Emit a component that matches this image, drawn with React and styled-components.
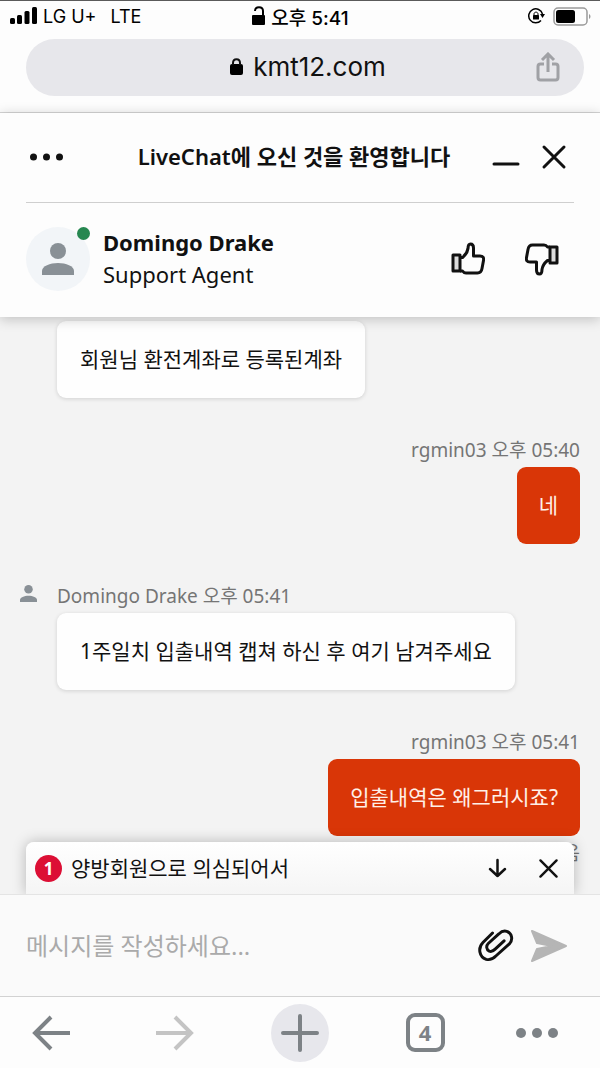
import React from "react";
import styled, { createGlobalStyle, css } from "styled-components";

const GlobalStyle = createGlobalStyle`
  *, *::before, *::after { box-sizing: border-box; }
  body {
    margin: 0;
    background: #fdfdfd;
    color: #111;
    font-family: "Noto Sans", "Noto Sans CJK KR", sans-serif;
  }
  p, h1, h2 { margin: 0; }
`;

const Screen = styled.div`
  display: flex;
  flex-direction: column;
  min-height: 100vh;
  border-top: 1px solid #5a5a5a;
`;

const StatusBar = styled.div`
  display: grid;
  grid-template-columns: 1fr auto 1fr;
  align-items: center;
  height: 30px;
  padding: 0 9px 0 10px;
  font-family: Inter, "Noto Sans CJK KR", sans-serif;
  color: #000;
`;

const StatusGroup = styled.div`
  display: flex;
  align-items: center;
  gap: ${(p) => p.$gap}px;
  justify-content: ${(p) => p.$align || "flex-start"};
  font-weight: ${(p) => (p.$strong ? 500 : 400)};
  font-size: ${(p) => (p.$strong ? 19 : 18)}px;
`;

const Network = styled.span`
  margin-left: 8px;
`;

const AddressArea = styled.div`
  padding: 8px 16px 16px 26px;
  border-bottom: 1px solid #d6d6d6;
`;

const AddressBar = styled.div`
  display: grid;
  grid-template-columns: 62px 1fr 56px;
  align-items: center;
  height: 57px;
  padding-bottom: 2px;
  border-radius: 29px;
  background: #e7e7eb;
`;

const Address = styled.a`
  grid-column: 2;
  display: flex;
  align-items: center;
  justify-content: center;
  gap: 10px;
  color: #111;
  text-decoration: none;
  font: 400 26px/32px Inter, sans-serif;
`;

const IconButton = styled.button`
  display: flex;
  align-items: center;
  justify-content: center;
  flex: none;
  width: ${(p) => p.$w || 40}px;
  height: ${(p) => p.$h || 40}px;
  padding: 0;
  border: 0;
  background: none;
  color: ${(p) => p.$color || "#111"};
  cursor: pointer;
`;

const ChatHeader = styled.header`
  position: relative;
  z-index: 2;
  padding: 0 26px;
  background: #fdfdfd;
  box-shadow: 0 2px 12px rgba(0, 0, 0, 0.22);
`;

const TitleRow = styled.div`
  display: grid;
  grid-template-columns: 74px 1fr 86px;
  align-items: center;
  height: 90px;
  padding-bottom: 2px;
  border-bottom: 1px solid #cfcfcf;
`;

const Title = styled.h1`
  padding-bottom: 2px;
  text-align: center;
  white-space: nowrap;
  font-size: 22px;
  font-weight: 600;
  line-height: 32px;
`;

const WindowControls = styled.div`
  display: flex;
  justify-content: space-between;
`;

const AgentRow = styled.div`
  display: flex;
  align-items: center;
  height: 114px;
  padding: 0 12px 2px 0;
`;

const Avatar = styled.div`
  position: relative;
  display: flex;
  align-items: center;
  justify-content: center;
  width: 64px;
  height: 64px;
  margin-right: 13px;
  border-radius: 50%;
  background: #f2f5f8;
`;

const Online = styled.span`
  position: absolute;
  top: 0;
  right: 0;
  width: 13px;
  height: 13px;
  border-radius: 50%;
  background: #268750;
`;

const AgentText = styled.div`
  flex: 1;
  padding-bottom: 2px;
  line-height: 32px;
  font-size: 22px;
`;

const AgentName = styled.h2`
  font-size: 22px;
  font-weight: 700;
  line-height: 32px;
`;

const RatingButtons = styled.div`
  display: flex;
  gap: 34px;
`;

const Chat = styled.main`
  position: relative;
  display: flex;
  flex-direction: column;
  gap: 35px;
  flex: 1;
  padding: 4px 20px 24px;
  background: #f3f3f3;
`;

const Message = styled.article`
  display: flex;
  flex-direction: column;
  align-items: ${(p) => (p.$own ? "flex-end" : "flex-start")};
  padding-left: ${(p) => (p.$own ? 0 : 37)}px;
`;

const Meta = styled.p`
  display: flex;
  align-items: center;
  height: 34px;
  padding-bottom: 2px;
  color: #757575;
  font-size: 19px;
`;

const MiniAvatar = styled.span`
  display: flex;
  width: 37px;
  margin-left: -37px;
  padding-bottom: 3px;
`;

const Bubble = styled.p`
  padding: 22px;
  border-radius: 9px;
  background: #fefefe;
  box-shadow: 0 1px 4px rgba(0, 0, 0, 0.14);
  font-size: 21px;
  line-height: 33px;
  ${(p) =>
    p.$own &&
    css`
      background: #d93607;
      color: #fff0e8;
      box-shadow: none;
    `}
  ${(p) =>
    !p.$own &&
    css`
      padding: 22px 23px;
    `}
`;

const NewMessage = styled.aside`
  position: absolute;
  left: 26px;
  right: 26px;
  bottom: 0;
  display: flex;
  align-items: center;
  height: 52px;
  padding-left: 9px;
  border-radius: 8px 8px 0 0;
  background: linear-gradient(#fff, #f5f5f5);
  box-shadow: 0 0 14px rgba(0, 0, 0, 0.25);
`;

const Count = styled.span`
  width: 27px;
  height: 27px;
  margin-right: 9px;
  border-radius: 50%;
  background: #dc0f35;
  color: #fff;
  text-align: center;
  font-size: 17px;
  font-weight: 700;
  line-height: 27px;
`;

const Preview = styled.p`
  flex: 1;
  font-size: 21px;
  line-height: 32px;
`;

const Composer = styled.form`
  position: relative;
  z-index: 1;
  display: flex;
  align-items: center;
  height: 103px;
  padding: 0 26px;
  border-top: 1px solid #e4e4e4;
  border-bottom: 1px solid #d2d2d2;
  background: #fafafa;
`;

const MessageInput = styled.input`
  flex: 1;
  min-width: 0;
  padding: 0;
  border: 0;
  outline: 0;
  background: none;
  font-family: inherit;
  font-size: 24px;
  line-height: 36px;
  &::placeholder {
    color: #aaa;
    opacity: 1;
  }
`;

const BrowserBar = styled.nav`
  display: grid;
  grid-template-columns: 102fr 146fr 104fr 146fr 78fr;
  place-items: center;
  height: 71px;
  padding-right: 24px;
`;

const NewTab = styled(IconButton)`
  width: 58px;
  height: 58px;
  border-radius: 50%;
  background: #e7e7ec;
`;

const Tabs = styled(IconButton)`
  width: 39px;
  height: 39px;
  padding-bottom: 2px;
  border: 4px solid #7d8286;
  border-radius: 9px;
  font: 700 22px/28px "Noto Sans", sans-serif;
`;

const Person = ({ size }) => (
  <svg width={size} height={size} viewBox="0 0 32 32" fill="#899096" aria-hidden="true">
    <circle cx="16" cy="8" r="8" />
    <path d="M0 32v-4c0-5 8-8 16-8s16 3 16 8v4z" />
  </svg>
);

const Cross = ({ size, stroke }) => (
  <svg width={size} height={size} viewBox="0 0 26 26" fill="none" stroke="currentColor" strokeWidth={stroke} strokeLinecap="round" aria-hidden="true">
    <path d="M3 3l20 20M23 3L3 23" />
  </svg>
);

const Thumb = ({ down }) => (
  <svg width="34" height="34" viewBox="0 0 34 34" fill="none" stroke="currentColor" strokeWidth="3" strokeLinejoin="round" aria-hidden="true">
    <g transform={down ? "rotate(180 17 17)" : undefined}>
      <path d="M2 13h7v16H2z" fill="#dcdcdc" />
      <path d="M9 15.500h2.500c3-2.500 5-5.500 5.500-9 0-3 .5-4.500 2.500-4.500s3 1.500 3 4v8H29c3 0 4 1.500 3.500 4.500l-1.500 8c-.5 3-1.500 4.500-4.500 4.500H15c-2 0-2.500-.5-3.500-2H9" />
    </g>
  </svg>
);

const Dots = ({ width, r }) => (
  <svg width={width} height="12" viewBox={`0 0 ${width} 12`} fill="currentColor" aria-hidden="true">
    <circle cx={r} cy="6" r={r} />
    <circle cx={width / 2} cy="6" r={r} />
    <circle cx={width - r} cy="6" r={r} />
  </svg>
);

const BackArrow = ({ flip }) => (
  <svg width="40" height="36" viewBox="0 0 40 36" fill="none" stroke="currentColor" strokeWidth="4" aria-hidden="true">
    <path transform={flip ? "translate(40 0) scale(-1 1)" : undefined} d="M39 18H3M20 2L4 18l16 16" />
  </svg>
);

export default function App() {
  return (
    <>
      <GlobalStyle />
      <Screen>
        <StatusBar>
          <StatusGroup $gap={6}>
            <svg width="27" height="18" viewBox="0 0 27 18" aria-hidden="true">
              <rect x="0" y="11" width="5" height="6" rx="1.500" />
              <rect x="7" y="8" width="5" height="9" rx="1.500" />
              <rect x="14.500" y="4" width="5" height="13" rx="1.500" />
              <rect x="22" y="0" width="5" height="17" rx="1.500" />
            </svg>
            <span>LG U+</span>
            <Network>LTE</Network>
          </StatusGroup>
          <StatusGroup $gap={5} $strong>
            <svg width="14" height="20" viewBox="0 0 14 20" aria-hidden="true">
              <rect y="9" width="13" height="10" rx="1" />
              <path d="M3 5c0-5 8-5 8 0v5" fill="none" stroke="#000" strokeWidth="2" />
            </svg>
            <span>오후 5:41</span>
          </StatusGroup>
          <StatusGroup $gap={8} $align="flex-end">
            <svg width="17" height="16" viewBox="0 0 17 16" aria-hidden="true">
              <path d="M14.500 6A7 7 0 1 0 13 12.500" fill="none" stroke="#000" strokeWidth="1.500" />
              <path d="M12 6h5l-2.500 4z" />
              <rect x="5" y="7" width="6" height="4.500" rx=".5" />
              <path d="M6 7V6c0-2.500 4-2.500 4 0v1" fill="none" stroke="#000" />
            </svg>
            <svg width="38" height="19" viewBox="0 0 38 19" aria-hidden="true">
              <rect x="1" y="1" width="33" height="17" rx="4" fill="none" stroke="#999" strokeWidth="1.500" />
              <rect x="3" y="3" width="19" height="13" rx="2.500" />
              <path d="M36 7c2 1 2 4 0 5z" fill="#999" />
            </svg>
          </StatusGroup>
        </StatusBar>

        <AddressArea>
          <AddressBar>
            <Address href="#">
              <svg width="13" height="17" viewBox="0 0 13 17" aria-hidden="true">
                <rect y="6" width="13" height="11" rx="2" />
                <path d="M3 7V5c0-5 7-5 7 0v2" fill="none" stroke="#111" strokeWidth="2" />
              </svg>
              kmt12.com
            </Address>
            <IconButton aria-label="공유" $color="#a0a1a5">
              <svg width="24" height="30" viewBox="0 0 24 30" fill="none" stroke="currentColor" strokeWidth="3" aria-hidden="true">
                <path d="M8 12H4.500Q2 12 2 14.500v11Q2 28 4.500 28h15q2.500 0 2.500-2.500v-11Q22 12 19.500 12H16M12 20V3M6 8l6-6 6 6" />
              </svg>
            </IconButton>
          </AddressBar>
        </AddressArea>

        <ChatHeader>
          <TitleRow>
            <IconButton aria-label="메뉴">
              <Dots width={33} r={3.5} />
            </IconButton>
            <Title>LiveChat에 오신 것을 환영합니다</Title>
            <WindowControls>
              <IconButton aria-label="최소화" $w={36}>
                <svg width="28" height="20" viewBox="0 0 28 20" stroke="currentColor" strokeWidth="3" strokeLinecap="round" aria-hidden="true">
                  <path d="M2 17h24" />
                </svg>
              </IconButton>
              <IconButton aria-label="닫기">
                <Cross size={26} stroke={3} />
              </IconButton>
            </WindowControls>
          </TitleRow>
          <AgentRow>
            <Avatar>
              <Person size={32} />
              <Online />
            </Avatar>
            <AgentText>
              <AgentName>Domingo Drake</AgentName>
              <p>Support Agent</p>
            </AgentText>
            <RatingButtons>
              <IconButton aria-label="좋아요">
                <Thumb />
              </IconButton>
              <IconButton aria-label="싫어요">
                <Thumb down />
              </IconButton>
            </RatingButtons>
          </AgentRow>
        </ChatHeader>

        <Chat>
          <Message>
            <Bubble>회원님 환전계좌로 등록된계좌</Bubble>
          </Message>
          <Message $own>
            <Meta>rgmin03 오후 05:40</Meta>
            <Bubble $own>네</Bubble>
          </Message>
          <Message>
            <Meta>
              <MiniAvatar>
                <Person size={17} />
              </MiniAvatar>
              Domingo Drake 오후 05:41
            </Meta>
            <Bubble>1주일치 입출내역 캡쳐 하신 후 여기 남겨주세요</Bubble>
          </Message>
          <Message $own>
            <Meta>rgmin03 오후 05:41</Meta>
            <Bubble $own>입출내역은 왜그러시죠?</Bubble>
            <Meta>읽음</Meta>
          </Message>
          <NewMessage>
            <Count>1</Count>
            <Preview>양방회원으로 의심되어서</Preview>
            <IconButton aria-label="아래로" $w={51}>
              <svg width="19" height="20" viewBox="0 0 19 20" fill="none" stroke="currentColor" strokeWidth="2.500" strokeLinecap="round" strokeLinejoin="round" aria-hidden="true">
                <path d="M9.500 2v16M2 11l7.500 7 7.500-7" />
              </svg>
            </IconButton>
            <IconButton aria-label="알림 닫기" $w={51}>
              <Cross size={21} stroke={3} />
            </IconButton>
          </NewMessage>
        </Chat>

        <Composer onSubmit={(e) => e.preventDefault()}>
          <MessageInput aria-label="메시지" placeholder="메시지를 작성하세요..." />
          <IconButton type="button" aria-label="파일 첨부" $w={58}>
            <svg width="37" height="33" viewBox="110 300 112 100" fill="none" stroke="currentColor" strokeWidth="9" strokeLinecap="round" aria-hidden="true">
              <path d="M157 312L128 341C112 357 116 384 138 392C150 395 160 389 168 381L208 345C220 333 216 312 200 307C190 304 182 309 176 315L144 344C137 351 138 363 147 367C155 370 161 365 165 361L192 336" />
            </svg>
          </IconButton>
          <IconButton aria-label="보내기" $w={50} $color="#b5b5b5">
            <svg width="38" height="34" viewBox="0 0 38 34" fill="currentColor" stroke="currentColor" strokeWidth="2" strokeLinejoin="round" aria-hidden="true">
              <path d="M2 2l34 15L2 32l5-12 15-3L7 14z" />
            </svg>
          </IconButton>
        </Composer>

        <BrowserBar aria-label="브라우저">
          <IconButton aria-label="뒤로" $color="#7d8286">
            <BackArrow />
          </IconButton>
          <IconButton aria-label="앞으로" $color="#c4c4c4">
            <BackArrow flip />
          </IconButton>
          <NewTab aria-label="새 탭" $color="#7d8286">
            <svg width="38" height="38" viewBox="0 0 38 38" stroke="currentColor" strokeWidth="4" strokeLinecap="round" aria-hidden="true">
              <path d="M19 2v34M2 19h34" />
            </svg>
          </NewTab>
          <Tabs aria-label="탭 4개" $color="#7d8286">4</Tabs>
          <IconButton aria-label="더보기" $w={43} $color="#7d8286">
            <Dots width={42} r={5} />
          </IconButton>
        </BrowserBar>
      </Screen>
    </>
  );
}
